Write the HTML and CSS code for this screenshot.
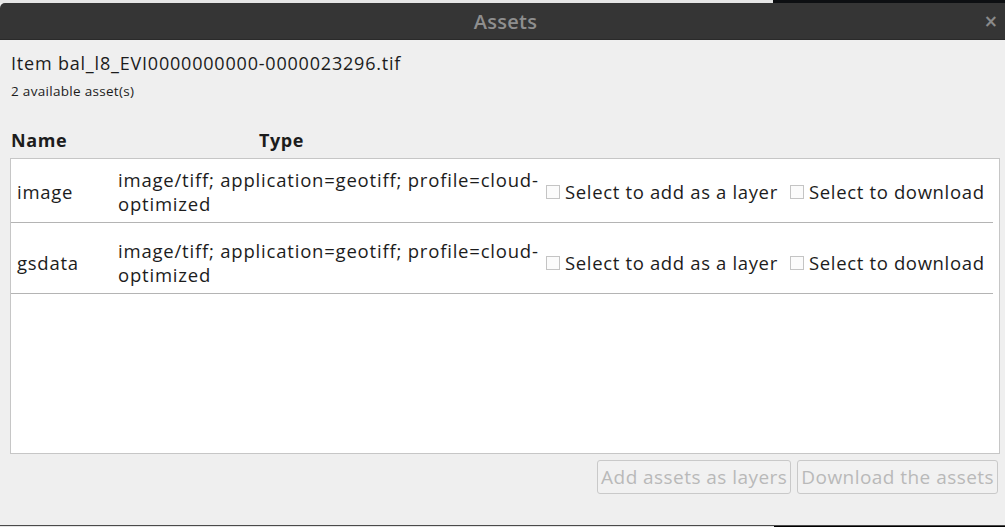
FILE: index.html
```html
<!DOCTYPE html>
<html>
<head>
<meta charset="utf-8">
<link rel="stylesheet" href="styles.css">
</head>
<body>
<div class="backdrop-top"><div class="bt-light"></div><div class="bt-dark"></div></div>
<div class="dialog">
  <div class="titlebar">
    <span class="title">Assets</span>
    <span class="close">×</span>
  </div>
  <div class="content">
    <div class="item">Item bal_l8_EVI0000000000-0000023296.tif</div>
    <div class="count">2 available asset(s)</div>
    <div class="header">
      <span class="h-name">Name</span>
      <span class="h-type">Type</span>
    </div>
    <div class="table">
      <div class="row first">
        <div class="c-name">image</div>
        <div class="c-type">image/tiff; application=geotiff; profile=cloud-<br>optimized</div>
        <label class="check"><span class="box"></span>Select to add as a layer</label>
        <label class="check"><span class="box"></span>Select to download</label>
      </div>
      <div class="row second">
        <div class="c-name">gsdata</div>
        <div class="c-type">image/tiff; application=geotiff; profile=cloud-<br>optimized</div>
        <label class="check"><span class="box"></span>Select to add as a layer</label>
        <label class="check"><span class="box"></span>Select to download</label>
      </div>
    </div>
    <div class="actions">
      <button class="btn" disabled>Add assets as layers</button>
      <button class="btn" disabled>Download the assets</button>
    </div>
  </div>
</div>
<div class="backdrop-bottom"><div class="bb-light"></div><div class="bb-dark"></div></div>
</body>
</html>
```
FILE: styles.css
```css
html, body {
  margin: 0;
  padding: 0;
  width: 1005px;
  height: 527px;
  overflow: hidden;
  background: #efefef;
  font-family: "Open Sans", "Noto Sans", sans-serif;
  color: #1c1c1c;
}
.backdrop-top {
  display: flex;
  height: 3px;
}
.bt-light { flex: 0 0 773px; background: #e6e6e6; }
.bt-dark { flex: 1; background: #0d0f12; }
.dialog {
  display: flex;
  flex-direction: column;
  height: 522px;
  background: #efefef;
}
.titlebar {
  position: relative;
  height: 36px;
  background: #353535;
  border-top-left-radius: 5px;
  display: flex;
  align-items: center;
  justify-content: center;
  border-bottom: 1px solid #2a2a2a;
}
.title {
  font-family: "Open Sans", sans-serif;
  font-weight: 600;
  font-size: 20px;
  letter-spacing: 0.3px;
  color: #8e8e8e;
  margin-left: 6px;
}
.close {
  position: absolute;
  right: 7px;
  top: 8px;
  font-size: 17px;
  font-weight: bold;
  color: #8a8a8a;
  font-family: "DejaVu Sans", sans-serif;
}
.content {
  flex: 1;
  display: flex;
  flex-direction: column;
  padding: 11px 5px 0 10px;
}
.item {
  font-size: 18px;
  letter-spacing: 0.8px;
  line-height: 24px;
  padding-left: 1px;
}
.count {
  font-size: 13.5px;
  letter-spacing: 0.3px;
  line-height: 18px;
  margin-top: 7px;
  padding-left: 1px;
}
.header {
  display: flex;
  margin-top: 28px;
  font-size: 18px;
  font-weight: bold;
  letter-spacing: 0.6px;
  line-height: 24px;
}
.h-name { width: 248px; padding-left: 1px; }
.table {
  margin-top: 6px;
  height: 294px;
  background: #fff;
  border: 1px solid #c6c6c6;
  display: flex;
  flex-direction: column;
}
.row {
  display: grid;
  grid-template-columns: 107px 428px 244px auto;
  align-items: center;
  height: 48px;
  box-sizing: content-box;
  border-bottom: 1px solid #b4b4b4;
  margin-right: 6px;
  font-size: 18.5px;
  letter-spacing: 0.75px;
  line-height: 24px;
}
.row.first { padding: 9px 0 6px; }
.row.second { padding: 16px 0 6px; }
.c-name { padding-left: 6px; }
.c-type { letter-spacing: 0.8px; }
.check {
  display: flex;
  align-items: center;
  white-space: nowrap;
  letter-spacing: 0.65px;
}
.box {
  width: 12px;
  height: 12px;
  border: 1px solid #c4c4c4;
  background: #fbfbfb;
  margin-right: 5px;
  flex: none;
}
.actions {
  display: flex;
  justify-content: flex-end;
  gap: 6px;
  margin-top: 6px;
  padding-right: 2px;
}
.btn {
  font-family: "Open Sans", sans-serif;
  font-size: 19px;
  letter-spacing: 0.45px;
  height: 34px;
  padding: 0 3px;
  color: #b9b9b9;
  background: #f1f1f1;
  border: 1px solid #c9c9c9;
  border-radius: 3px;
}
.backdrop-bottom {
  display: flex;
  height: 3px;
  border-top: 1px solid #4a4a4a;
  box-sizing: border-box;
}
.bb-light { flex: 0 0 774px; background: #e4e4e4; }
.bb-dark { flex: 1; background: #000; }
```
